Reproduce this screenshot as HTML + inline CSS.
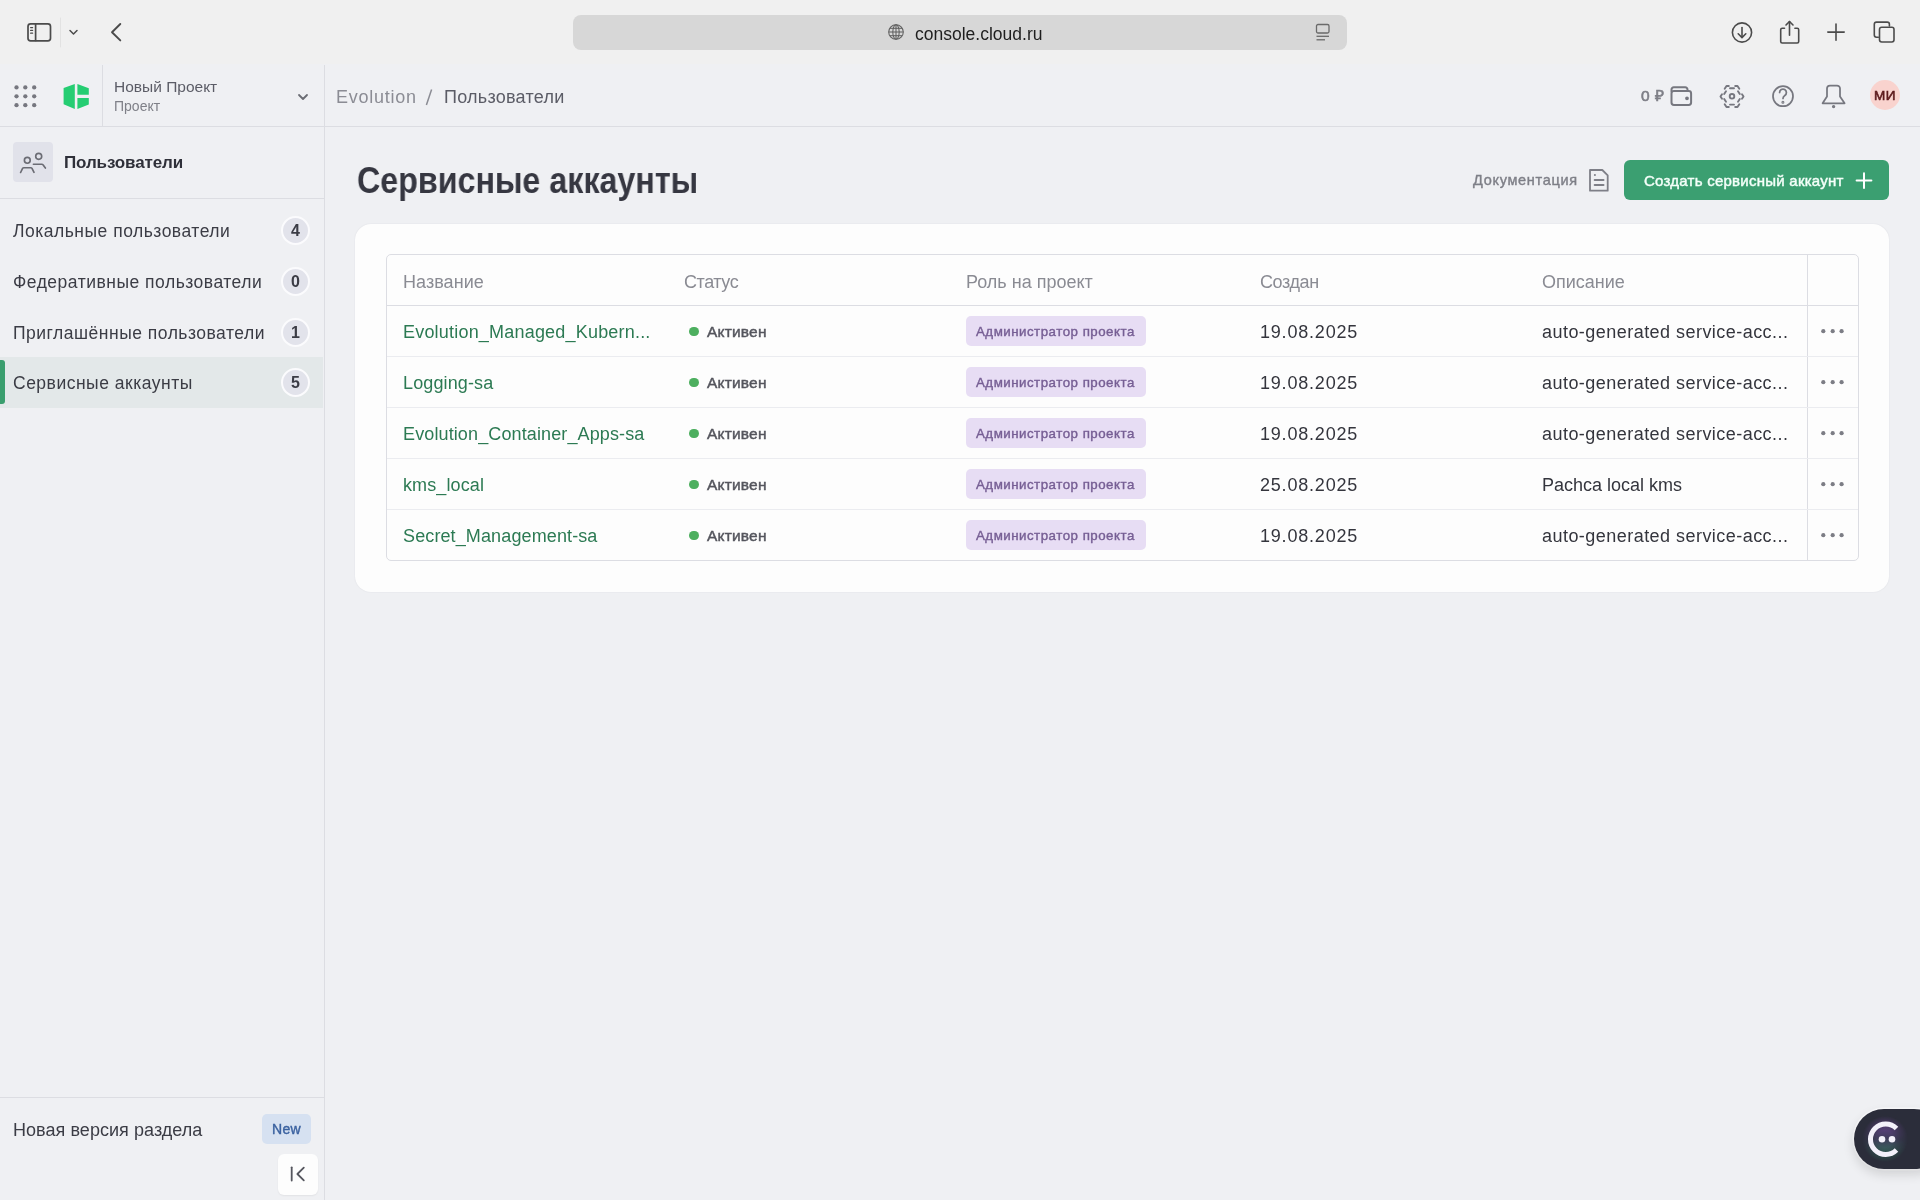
<!DOCTYPE html>
<html><head><meta charset="utf-8">
<style>
*{box-sizing:border-box;margin:0;padding:0}
html,body{width:1920px;height:1200px;overflow:hidden;background:#eff0f3;font-family:"Liberation Sans",sans-serif;position:relative}
.abs{position:absolute}
.t{position:absolute;white-space:nowrap;line-height:1;will-change:transform}
.aa{will-change:transform}
.badge{will-change:transform;position:absolute;width:29px;height:29px;border-radius:50%;background:#e2e3eb;border:2px solid #fbfbfd;font-size:16px;font-weight:bold;color:#3b3c45;text-align:center;line-height:25px}
</style></head><body>
<div class="abs" style="left:0;top:0;width:1920px;height:64px;background:#f0f0f0"></div>
<svg class="abs" style="left:0;top:0" width="1920" height="65" viewBox="0 0 1920 65" fill="none" stroke="#4b4b4b" stroke-width="1.7" stroke-linecap="round" stroke-linejoin="round">
 <rect x="28" y="23.8" width="22.5" height="17" rx="2.6"/>
 <line x1="35.6" y1="24" x2="35.6" y2="40.5"/>
 <line x1="30.6" y1="27.6" x2="32.6" y2="27.6" stroke-width="1.2"/>
 <line x1="30.6" y1="30.4" x2="32.6" y2="30.4" stroke-width="1.2"/>
 <line x1="30.6" y1="33.2" x2="32.6" y2="33.2" stroke-width="1.2"/>
 <polyline points="70,30.5 73.5,34 77,30.5" stroke-width="1.5"/>
 <line x1="60.5" y1="18" x2="60.5" y2="47" stroke="#e2e2e2" stroke-width="1"/>
 <polyline points="120.3,24 112,32.2 120.3,40.4" stroke-width="1.9"/>
 <circle cx="1742" cy="32.5" r="9.6" stroke-width="1.6"/>
 <line x1="1742" y1="27.5" x2="1742" y2="37.2" stroke-width="1.6"/>
 <polyline points="1738.2,33.8 1742,37.6 1745.8,33.8" stroke-width="1.6"/>
 <path d="M1784.5,28.2 h-2.3 a1.5,1.5 0 0 0 -1.5,1.5 v11.8 a1.5,1.5 0 0 0 1.5,1.5 h15 a1.5,1.5 0 0 0 1.5,-1.5 v-11.8 a1.5,1.5 0 0 0 -1.5,-1.5 h-2.3" stroke-width="1.6"/>
 <line x1="1789.5" y1="21.5" x2="1789.5" y2="35.3" stroke-width="1.6"/>
 <polyline points="1786,25 1789.5,21.5 1793,25" stroke-width="1.6"/>
 <line x1="1836" y1="24" x2="1836" y2="40.2" stroke-width="1.6"/>
 <line x1="1827.8" y1="32.1" x2="1844.2" y2="32.1" stroke-width="1.6"/>
 <path d="M1878.3,37.2 h-1.8 a2.2,2.2 0 0 1 -2.2,-2.2 v-10.7 a2.2,2.2 0 0 1 2.2,-2.2 h10.7 a2.2,2.2 0 0 1 2.2,2.2 v1.6" stroke-width="1.6"/>
 <rect x="1879.5" y="27.2" width="14.5" height="14.8" rx="2.2" stroke-width="1.6"/>
</svg>
<div class="abs" style="left:573px;top:15px;width:774px;height:35px;background:#d7d7d7;border-radius:8px"></div>
<svg class="abs" style="left:886px;top:22px" width="20" height="20" viewBox="0 0 20 20" fill="none" stroke="#606060" stroke-width="1.05">
 <circle cx="10" cy="10" r="7.3"/>
 <ellipse cx="10" cy="10" rx="3.2" ry="7.3"/>
 <line x1="10" y1="2.7" x2="10" y2="17.3"/>
 <line x1="2.7" y1="10" x2="17.3" y2="10"/>
 <line x1="3.8" y1="6.3" x2="16.2" y2="6.3"/>
 <line x1="3.8" y1="13.7" x2="16.2" y2="13.7"/>
</svg>
<div class="t" style="left:914.5px;top:25.5px;font-size:17.5px;color:#1e1e1e">console.cloud.ru</div>
<svg class="abs" style="left:1313px;top:22px" width="20" height="22" viewBox="0 0 20 22" fill="none" stroke="#6a6a6a" stroke-width="1.3">
 <rect x="3.5" y="2.5" width="12.5" height="8.5" rx="1.5"/>
 <line x1="3.5" y1="14.3" x2="16" y2="14.3"/>
 <line x1="3.5" y1="17.8" x2="12" y2="17.8"/>
</svg>
<div class="abs" style="left:0;top:64px;width:1920px;height:63px;background:#eff0f3;border-bottom:1px solid #dcdde2"></div>
<svg class="abs" style="left:0;top:65px" width="330" height="62" viewBox="0 0 330 62">
 <g fill="#76777f">
  <circle cx="16.5" cy="22.4" r="2.15"/><circle cx="25.3" cy="22.4" r="2.15"/><circle cx="34.2" cy="22.4" r="2.15"/>
  <circle cx="16.5" cy="31.3" r="2.15"/><circle cx="25.3" cy="31.3" r="2.15"/><circle cx="34.2" cy="31.3" r="2.15"/>
  <circle cx="16.5" cy="40.2" r="2.15"/><circle cx="25.3" cy="40.2" r="2.15"/><circle cx="34.2" cy="40.2" r="2.15"/>
 </g>
 <path fill="#25cd72" d="M63.6,23 L74.8,19 L74.8,44 L63.6,39.3 Z M77.4,19 L88.8,23.2 L88.8,29.8 L77.4,29.8 Z M77.4,33.1 L88.8,33.1 L88.8,39.6 L77.4,44 Z"/>
 <line x1="102.5" y1="0" x2="102.5" y2="61" stroke="#dcdde2" stroke-width="1"/>
 <polyline points="299,30 303,34 307,30" fill="none" stroke="#6b6c74" stroke-width="1.8" stroke-linecap="round" stroke-linejoin="round"/>
</svg>
<div class="t" style="left:113.5px;top:79px;font-size:15.5px;color:#5b5c66">Новый Проект</div>
<div class="t" style="left:113.5px;top:99px;font-size:14px;color:#7f8088">Проект</div>
<div class="t" style="left:336px;top:87.5px;font-size:18px;color:#8b8c94;letter-spacing:0.75px">Evolution</div>
<svg class="abs" style="left:420px;top:85px" width="20" height="24"><line x1="11.6" y1="4.5" x2="6.4" y2="20" stroke="#8b8c94" stroke-width="1.5"/></svg>
<div class="t" style="left:443.5px;top:87.5px;font-size:18px;color:#5b5c66;letter-spacing:0.25px">Пользователи</div>
<div class="t" style="left:1641px;top:88px;font-size:15.5px;color:#7e7f87;letter-spacing:0.3px;-webkit-text-stroke:0.6px #7e7f87">0 ₽</div>
<svg class="abs" style="left:1660px;top:75px" width="250" height="44" viewBox="1660 75 250 44" fill="none" stroke="#76777f" stroke-width="2" stroke-linecap="round" stroke-linejoin="round">
 <path d="M1671.5,91.5 v-2 a2.2,2.2 0 0 1 2.2,-2.2 h11.6 a2.2,2.2 0 0 1 2.2,2.2 v1.5"/>
 <rect x="1671.5" y="91" width="19.6" height="14" rx="2.4"/>
 <circle cx="1687" cy="98.3" r="0.9" fill="#76777f"/>
 <g stroke-width="1.9">
 <line x1="1730" y1="88.2" x2="1734" y2="88.2"/>
 <line x1="1730" y1="104.6" x2="1734" y2="104.6"/>
 <polyline points="1724.7,88.8 1726.5,86 1728.8,86"/>
 <polyline points="1735.2,86 1737.5,86 1739.3,88.8"/>
 <line x1="1738" y1="91.2" x2="1739.8" y2="94"/>
 <polyline points="1742,94.2 1743.5,96.5 1742,98.8"/>
 <line x1="1739.8" y1="99" x2="1738" y2="101.8"/>
 <polyline points="1739.3,104.2 1737.5,107 1735.2,107"/>
 <polyline points="1728.8,107 1726.5,107 1724.7,104.2"/>
 <line x1="1726" y1="101.8" x2="1724.2" y2="99"/>
 <polyline points="1722,98.8 1720.5,96.5 1722,94.2"/>
 <line x1="1724.2" y1="94" x2="1726" y2="91.2"/>
 <circle cx="1732" cy="96.35" r="2.3"/>
 </g>
 <circle cx="1783" cy="96.2" r="10" stroke-width="1.75"/>
 <path d="M1779.6,92.5 a3.4,3.4 0 1 1 5.2,2.9 c-1.1,0.7 -1.8,1.5 -1.8,3" stroke-width="1.75"/>
 <circle cx="1782.9" cy="102.2" r="0.5" fill="#76777f"/>
 <path d="M1822.6,103.3 L1827,96.5 V88.5 a3,3 0 0 1 3,-3 h7 a3,3 0 0 1 3,3 V96.5 L1844.6,103.3 Z" stroke-width="1.75"/>
 <circle cx="1833.6" cy="106.6" r="0.7" fill="#76777f"/>
</svg>
<div class="abs" style="left:1869.7px;top:80.4px;width:30px;height:30px;border-radius:50%;background:#f9d3ce"></div>
<div class="t" style="left:1873.5px;top:89px;font-size:13.5px;color:#5c1a1c;letter-spacing:0.4px;-webkit-text-stroke:0.6px #5c1a1c">МИ</div>
<div class="abs" style="left:324px;top:65px;width:1px;height:1135px;background:#dcdde2"></div>
<div class="abs" style="left:13px;top:142px;width:40px;height:40px;border-radius:4px;background:#e1e2ea"></div>
<svg class="abs" style="left:13px;top:142px" width="40" height="40" viewBox="0 0 40 40" fill="none" stroke="#6b6c74" stroke-width="1.65" stroke-linecap="round">
 <circle cx="14.3" cy="18.3" r="2.9"/>
 <circle cx="25.7" cy="14.3" r="3"/>
 <path d="M7.6,30.5 L9.6,26.4 Q10,25.7 10.8,25.7 H17.8 Q18.6,25.7 19,26.4 L21,30.3" stroke-linejoin="round"/>
 <path d="M20.4,22.2 H28.8 Q29.6,22.2 30,22.8 L32.4,26.1" stroke-linejoin="round"/>
</svg>
<div class="t" style="left:64px;top:153.8px;font-size:17px;font-weight:bold;color:#2f3039;letter-spacing:-0.12px">Пользователи</div>
<div class="abs" style="left:0;top:198px;width:324px;height:1px;background:#dcdde2"></div>
<div class="t" style="left:13px;top:223px;font-size:17.5px;color:#3b3c45;letter-spacing:0.5px">Локальные пользователи</div>
<div class="badge" style="left:281.3px;top:215.5px">4</div>
<div class="t" style="left:13px;top:274px;font-size:17.5px;color:#3b3c45;letter-spacing:0.5px">Федеративные пользователи</div>
<div class="badge" style="left:281.3px;top:266.5px">0</div>
<div class="t" style="left:13px;top:325px;font-size:17.5px;color:#3b3c45;letter-spacing:0.5px">Приглашённые пользователи</div>
<div class="badge" style="left:281.3px;top:317.5px">1</div>
<div class="abs" style="left:0;top:356.5px;width:323px;height:51px;background:#e3e8e9"></div>
<div class="abs" style="left:0;top:360px;width:4.7px;height:44px;background:#3a9e6e;border-radius:0 3px 3px 0"></div>
<div class="t" style="left:13px;top:375px;font-size:17.5px;color:#3b3c45;letter-spacing:0.5px">Сервисные аккаунты</div>
<div class="badge" style="left:281.3px;top:367.5px">5</div>
<div class="abs" style="left:0;top:1097px;width:324px;height:1px;background:#dcdde2"></div>
<div class="t" style="left:13px;top:1121px;font-size:18px;color:#3b3c45;letter-spacing:0.05px">Новая версия раздела</div>
<div class="abs aa" style="left:262px;top:1114px;width:49px;height:30px;border-radius:5px;background:#d6e1f1;color:#3b62a0;font-size:14px;text-align:center;line-height:30px;letter-spacing:0.3px;-webkit-text-stroke:0.4px #3b62a0">New</div>
<div class="abs" style="left:278.3px;top:1154.2px;width:40px;height:40.8px;border-radius:6px;background:#fdfdfd;box-shadow:0 1px 2px rgba(0,0,0,0.06)"></div>
<svg class="abs" style="left:278px;top:1154px" width="40" height="40" viewBox="0 0 40 40" fill="none" stroke="#55565e" stroke-width="1.8" stroke-linecap="round" stroke-linejoin="round">
 <line x1="13.7" y1="13.3" x2="13.7" y2="26.6"/>
 <polyline points="25.8,13.6 19.4,20 25.8,26.4"/>
</svg>
<div class="t" style="left:356.5px;top:162.7px;font-size:36.8px;font-weight:bold;color:#363741;transform:scaleX(0.876);transform-origin:0 0">Сервисные аккаунты</div>
<div class="t" style="left:1473px;top:173.3px;font-size:14.5px;color:#7e7f87;letter-spacing:0.7px;-webkit-text-stroke:0.4px #7e7f87">Документация</div>
<svg class="abs" style="left:1580px;top:160px" width="40" height="40" viewBox="1580 160 40 40" fill="none" stroke="#7e7f87" stroke-width="1.8" stroke-linejoin="round" stroke-linecap="round">
 <path d="M1590,170 h12.3 l5.4,5.4 v15.3 h-17.7 z"/>
 <line x1="1594.8" y1="175" x2="1595" y2="175"/>
 <line x1="1594.6" y1="180" x2="1603.6" y2="180"/>
 <line x1="1594.6" y1="185" x2="1603.6" y2="185"/>
</svg>
<div class="abs" style="left:1623.5px;top:160px;width:265.5px;height:40.2px;border-radius:6px;background:#3b9f71"></div>
<div class="t" style="left:1643.5px;top:172.7px;font-size:15px;color:#f4fff9;letter-spacing:0.25px;-webkit-text-stroke:0.45px #f4fff9">Создать сервисный аккаунт</div>
<svg class="abs" style="left:1854px;top:170px" width="20" height="20" viewBox="0 0 20 20" stroke="#fff" stroke-width="2" stroke-linecap="round">
 <line x1="10" y1="3.3" x2="10" y2="18"/><line x1="2.6" y1="10.6" x2="17.4" y2="10.6"/>
</svg>
<div class="abs" style="left:355px;top:223.5px;width:1534px;height:368.5px;background:#fdfdfd;border-radius:16px;box-shadow:0 0 1.5px rgba(40,40,70,0.10)"></div>
<div class="abs" style="left:386px;top:254px;width:1473px;height:307px;border:1px solid #dcdde3;border-radius:5px"></div>
<div class="t" style="left:403px;top:272.6px;font-size:18px;color:#8a8b93;letter-spacing:0.05px">Название</div>
<div class="t" style="left:684.2px;top:272.6px;font-size:18px;color:#8a8b93;letter-spacing:-0.45px">Статус</div>
<div class="t" style="left:966px;top:272.6px;font-size:18px;color:#8a8b93;letter-spacing:0px">Роль на проект</div>
<div class="t" style="left:1260.3px;top:272.6px;font-size:18px;color:#8a8b93;letter-spacing:-0.4px">Создан</div>
<div class="t" style="left:1541.5px;top:272.6px;font-size:18px;color:#8a8b93;letter-spacing:0px">Описание</div>
<div class="abs" style="left:1807px;top:255px;width:1px;height:305px;background:#dcdde3"></div>
<div class="abs" style="left:387px;top:305px;width:1471px;height:1px;background:#dcdde3"></div>
<div class="t" style="left:403.3px;top:322.5px;font-size:18px;color:#2c7a53;letter-spacing:0.2px">Evolution_Managed_Kubern...</div>
<div class="abs" style="left:689.3px;top:326.7px;width:9.4px;height:9.4px;border-radius:50%;background:#4daf5f"></div>
<div class="t" style="left:707.3px;top:324.2px;font-size:15.5px;color:#54555d;letter-spacing:0.2px;-webkit-text-stroke:0.45px #54555d">Активен</div>
<div class="abs" style="left:966px;top:316.2px;width:180px;height:30.3px;border-radius:5px;background:#e7ddf4"></div>
<div class="t" style="left:976px;top:324.5px;font-size:13.3px;color:#765e94;letter-spacing:0.5px;-webkit-text-stroke:0.4px #765e94">Администратор проекта</div>
<div class="t" style="left:1260.3px;top:323.2px;font-size:18px;color:#34353d;letter-spacing:0.8px">19.08.2025</div>
<div class="t" style="left:1541.7px;top:322.9px;font-size:18px;color:#34353d;letter-spacing:0.46px">auto-generated service-acc...</div>
<svg class="abs" style="left:1820px;top:328px" width="26" height="6" viewBox="0 0 26 6" fill="#7c7d85"><circle cx="3.3" cy="3.2" r="2.1"/><circle cx="12.7" cy="3.2" r="2.1"/><circle cx="21.6" cy="3.2" r="2.1"/></svg>
<div class="abs" style="left:387px;top:356px;width:1471px;height:1px;background:#ebecf0"></div>
<div class="t" style="left:403.3px;top:373.5px;font-size:18px;color:#2c7a53;letter-spacing:0.12px">Logging-sa</div>
<div class="abs" style="left:689.3px;top:377.7px;width:9.4px;height:9.4px;border-radius:50%;background:#4daf5f"></div>
<div class="t" style="left:707.3px;top:375.2px;font-size:15.5px;color:#54555d;letter-spacing:0.2px;-webkit-text-stroke:0.45px #54555d">Активен</div>
<div class="abs" style="left:966px;top:367.2px;width:180px;height:30.3px;border-radius:5px;background:#e7ddf4"></div>
<div class="t" style="left:976px;top:375.5px;font-size:13.3px;color:#765e94;letter-spacing:0.5px;-webkit-text-stroke:0.4px #765e94">Администратор проекта</div>
<div class="t" style="left:1260.3px;top:374.2px;font-size:18px;color:#34353d;letter-spacing:0.8px">19.08.2025</div>
<div class="t" style="left:1541.7px;top:373.9px;font-size:18px;color:#34353d;letter-spacing:0.46px">auto-generated service-acc...</div>
<svg class="abs" style="left:1820px;top:379px" width="26" height="6" viewBox="0 0 26 6" fill="#7c7d85"><circle cx="3.3" cy="3.2" r="2.1"/><circle cx="12.7" cy="3.2" r="2.1"/><circle cx="21.6" cy="3.2" r="2.1"/></svg>
<div class="abs" style="left:387px;top:407px;width:1471px;height:1px;background:#ebecf0"></div>
<div class="t" style="left:403.3px;top:424.5px;font-size:18px;color:#2c7a53;letter-spacing:0.12px">Evolution_Container_Apps-sa</div>
<div class="abs" style="left:689.3px;top:428.7px;width:9.4px;height:9.4px;border-radius:50%;background:#4daf5f"></div>
<div class="t" style="left:707.3px;top:426.2px;font-size:15.5px;color:#54555d;letter-spacing:0.2px;-webkit-text-stroke:0.45px #54555d">Активен</div>
<div class="abs" style="left:966px;top:418.2px;width:180px;height:30.3px;border-radius:5px;background:#e7ddf4"></div>
<div class="t" style="left:976px;top:426.5px;font-size:13.3px;color:#765e94;letter-spacing:0.5px;-webkit-text-stroke:0.4px #765e94">Администратор проекта</div>
<div class="t" style="left:1260.3px;top:425.2px;font-size:18px;color:#34353d;letter-spacing:0.8px">19.08.2025</div>
<div class="t" style="left:1541.7px;top:424.9px;font-size:18px;color:#34353d;letter-spacing:0.46px">auto-generated service-acc...</div>
<svg class="abs" style="left:1820px;top:430px" width="26" height="6" viewBox="0 0 26 6" fill="#7c7d85"><circle cx="3.3" cy="3.2" r="2.1"/><circle cx="12.7" cy="3.2" r="2.1"/><circle cx="21.6" cy="3.2" r="2.1"/></svg>
<div class="abs" style="left:387px;top:458px;width:1471px;height:1px;background:#ebecf0"></div>
<div class="t" style="left:403.3px;top:475.5px;font-size:18px;color:#2c7a53;letter-spacing:0.12px">kms_local</div>
<div class="abs" style="left:689.3px;top:479.7px;width:9.4px;height:9.4px;border-radius:50%;background:#4daf5f"></div>
<div class="t" style="left:707.3px;top:477.2px;font-size:15.5px;color:#54555d;letter-spacing:0.2px;-webkit-text-stroke:0.45px #54555d">Активен</div>
<div class="abs" style="left:966px;top:469.2px;width:180px;height:30.3px;border-radius:5px;background:#e7ddf4"></div>
<div class="t" style="left:976px;top:477.5px;font-size:13.3px;color:#765e94;letter-spacing:0.5px;-webkit-text-stroke:0.4px #765e94">Администратор проекта</div>
<div class="t" style="left:1260.3px;top:476.2px;font-size:18px;color:#34353d;letter-spacing:0.8px">25.08.2025</div>
<div class="t" style="left:1541.7px;top:475.9px;font-size:18px;color:#34353d;letter-spacing:0.0px">Pachca local kms</div>
<svg class="abs" style="left:1820px;top:481px" width="26" height="6" viewBox="0 0 26 6" fill="#7c7d85"><circle cx="3.3" cy="3.2" r="2.1"/><circle cx="12.7" cy="3.2" r="2.1"/><circle cx="21.6" cy="3.2" r="2.1"/></svg>
<div class="abs" style="left:387px;top:509px;width:1471px;height:1px;background:#ebecf0"></div>
<div class="t" style="left:403.3px;top:526.5px;font-size:18px;color:#2c7a53;letter-spacing:0.12px">Secret_Management-sa</div>
<div class="abs" style="left:689.3px;top:530.7px;width:9.4px;height:9.4px;border-radius:50%;background:#4daf5f"></div>
<div class="t" style="left:707.3px;top:528.2px;font-size:15.5px;color:#54555d;letter-spacing:0.2px;-webkit-text-stroke:0.45px #54555d">Активен</div>
<div class="abs" style="left:966px;top:520.2px;width:180px;height:30.3px;border-radius:5px;background:#e7ddf4"></div>
<div class="t" style="left:976px;top:528.5px;font-size:13.3px;color:#765e94;letter-spacing:0.5px;-webkit-text-stroke:0.4px #765e94">Администратор проекта</div>
<div class="t" style="left:1260.3px;top:527.2px;font-size:18px;color:#34353d;letter-spacing:0.8px">19.08.2025</div>
<div class="t" style="left:1541.7px;top:526.9px;font-size:18px;color:#34353d;letter-spacing:0.46px">auto-generated service-acc...</div>
<svg class="abs" style="left:1820px;top:532px" width="26" height="6" viewBox="0 0 26 6" fill="#7c7d85"><circle cx="3.3" cy="3.2" r="2.1"/><circle cx="12.7" cy="3.2" r="2.1"/><circle cx="21.6" cy="3.2" r="2.1"/></svg>
<div class="abs" style="left:1854px;top:1109px;width:90px;height:60px;border-radius:30px;background:#2b2d3a;box-shadow:0 5px 12px rgba(0,0,0,0.14), 0 0 0 1.5px #fbfbfd"></div>
<div class="abs" style="left:1861px;top:1115px;width:48px;height:48px;border-radius:50%;background:linear-gradient(180deg, rgba(125,75,170,0.75) 15%, rgba(90,80,130,0.45) 50%, rgba(55,140,105,0.7) 85%);-webkit-mask-image:radial-gradient(circle, #000 25%, rgba(0,0,0,0.5) 45%, transparent 68%);mask-image:radial-gradient(circle, #000 25%, rgba(0,0,0,0.5) 45%, transparent 68%)"></div>
<svg class="abs" style="left:1854px;top:1108px" width="66" height="62" viewBox="0 0 66 62" fill="none">
 <path d="M42.5,20.45 A15.25,15.25 0 1 0 42.5,42.05" stroke="#f3f0fa" stroke-width="5"/>
 <circle cx="28" cy="31.25" r="3.3" fill="#f3f0fa"/>
 <circle cx="38" cy="31.25" r="3.3" fill="#f3f0fa"/>
</svg>
</body></html>
